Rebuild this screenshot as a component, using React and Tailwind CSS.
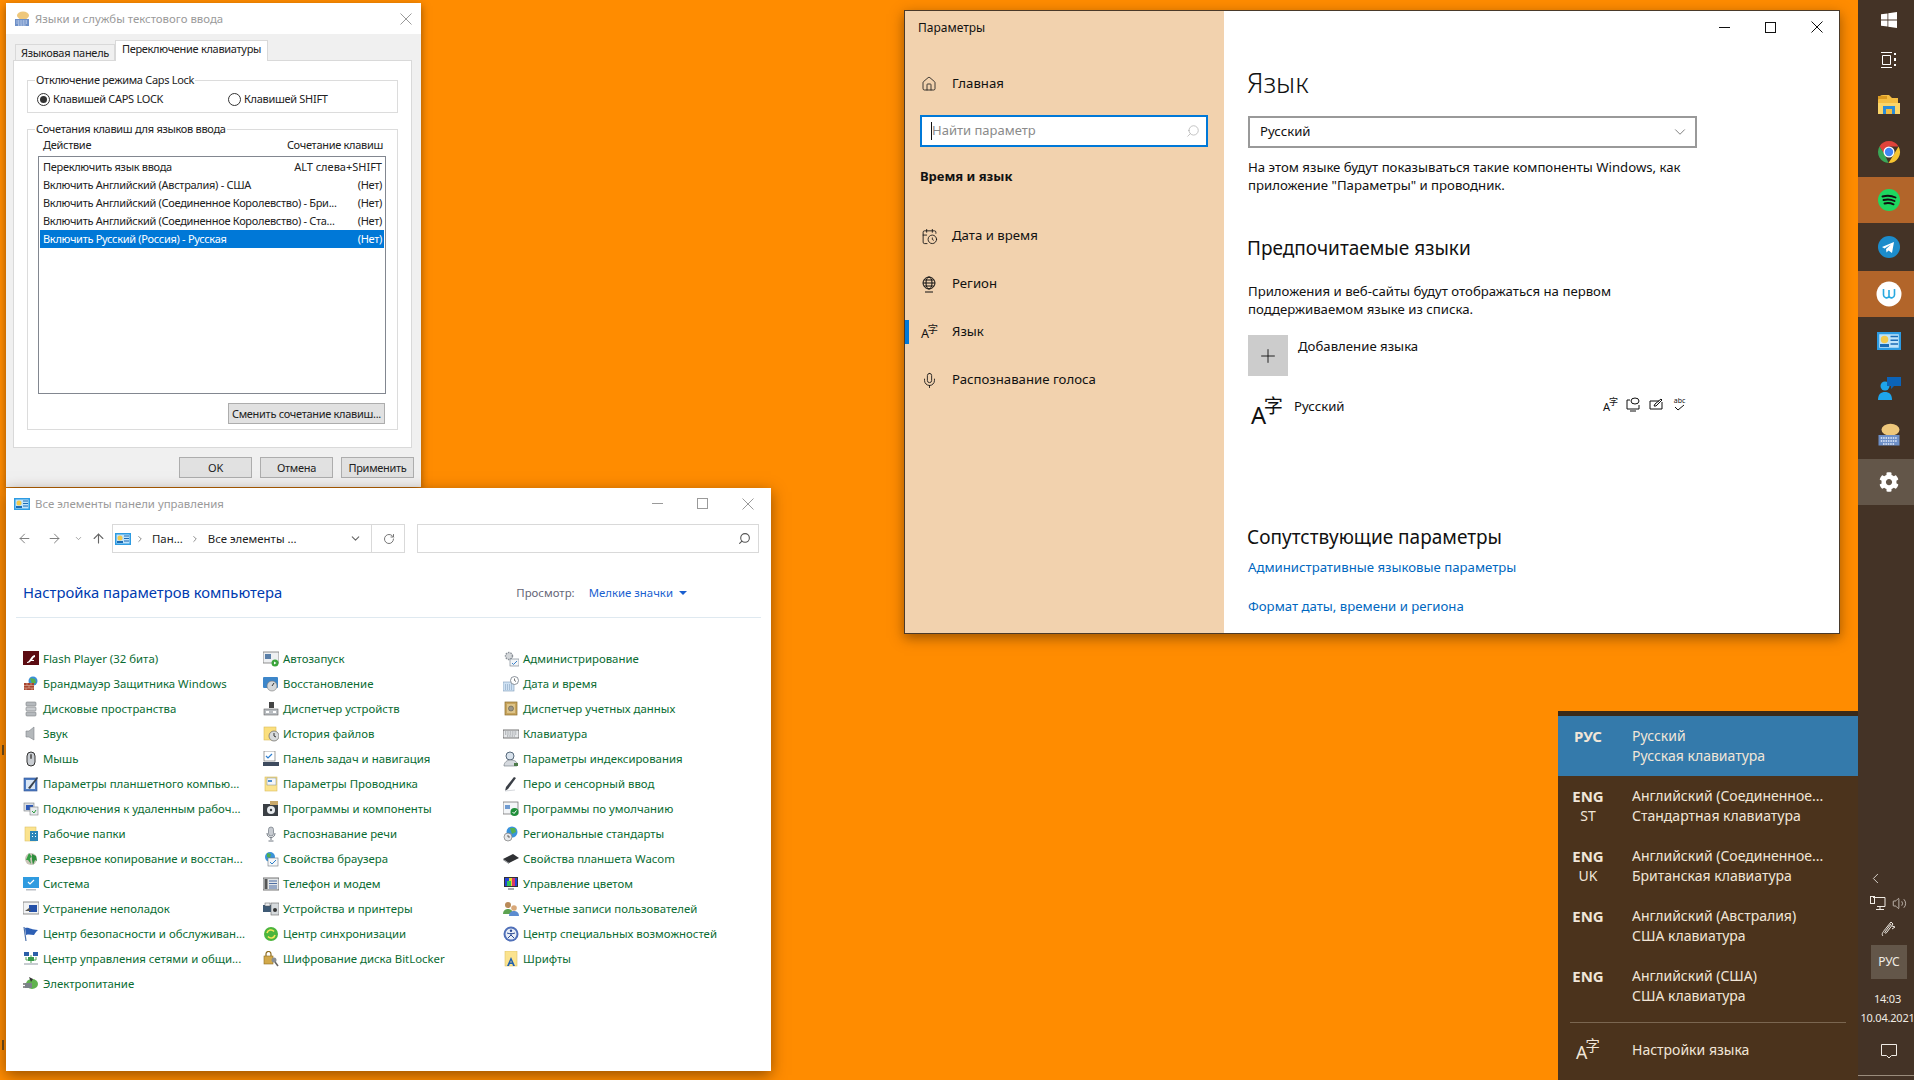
import React from 'react';
import { ArrowLeft, ArrowRight, ArrowUp, CalendarClock, ChevronDown, ChevronLeft, ChevronRight, Home, Mic, Plus, RotateCw, Search, Volume2 } from 'lucide-react';
import { FaCog } from 'react-icons/fa';

const font = "font-['Noto_Sans','Liberation_Sans',sans-serif]";

// Small control panel icons, drawn on a 16x16 grid
const cpIcons = {
  flash: <><rect x="0" y="0" width="16" height="14" fill="#5c0c12" /><path d="M4 11c3 0 3-6 8-7v2c-2 .3-2 2-3 3h2v1H8c-1 1-2 2-4 2z" fill="#fff" /></>,
  firewall: <><circle cx="10" cy="5" r="4.5" fill="#3a8fd8" /><path d="M7 2l5 1 1 4-4 1z" fill="#59b04a" /><rect x="1" y="7" width="10" height="7" fill="#a8452f" /><path d="M1 9.5h10M1 12h10M4 7v2.500M8 7v2.500M6 9.500V12M3 12v2M9 12v2" stroke="#e3b9a6" strokeWidth=".6" /></>,
  storage: <><rect x="3" y="1" width="10" height="4" rx="1" fill="#b5b9bd" stroke="#7c8084" strokeWidth=".6" /><rect x="3" y="6" width="10" height="4" rx="1" fill="#c8cbce" stroke="#7c8084" strokeWidth=".6" /><rect x="3" y="11" width="10" height="4" rx="1" fill="#b5b9bd" stroke="#7c8084" strokeWidth=".6" /></>,
  sound: <><path d="M3 5h3l5-4v13l-5-3H3z" fill="#b4b8bb" stroke="#80858a" strokeWidth=".6" /></>,
  mouse: <><rect x="4" y="1" width="8" height="14" rx="4" fill="#c9cdd2" stroke="#333" strokeWidth="1" /><rect x="7" y="3" width="2" height="5" rx="1" fill="#666" /></>,
  tablet: <><rect x="1" y="2" width="13" height="13" fill="#4d7cc3" stroke="#2c4f8f" strokeWidth=".6" /><rect x="3" y="4" width="9" height="9" fill="#d9e6f5" /><path d="M5 12L14 1l1 1-8 11z" fill="#39424e" /></>,
  rdp: <><rect x="1" y="2" width="10" height="8" fill="#d9dde2" stroke="#7c8084" strokeWidth=".6" /><rect x="3" y="4" width="7" height="5" fill="#2b58b8" /><rect x="7" y="6" width="8" height="8" fill="#e8ebee" stroke="#7c8084" strokeWidth=".6" /><path d="M9 10l2 2 2-3" stroke="#2a9a3d" fill="none" /></>,
  workfolders: <><rect x="2" y="1" width="11" height="14" fill="#fbe38e" stroke="#dcc26a" strokeWidth=".6" /><rect x="7" y="5" width="8" height="10" fill="#2c86b8" /><path d="M9 7h1v1H9zM12 7h1v1h-1zM9 10h1v1H9zM12 10h1v1h-1z" fill="#fff" /></>,
  backup: <><circle cx="8" cy="8" r="6" fill="#c9c4b8" /><path d="M3 9l3-7 3 4-2 1 1 6-3-4z" fill="#35a045" /><path d="M9 3l4 2 1 5-2-1-2 5-1-5z" fill="#2f8f3e" /></>,
  system: <><rect x="0" y="1" width="16" height="11" fill="#2f9be0" /><path d="M5 6l2 2 4-4" stroke="#fff" strokeWidth="1.200" fill="none" /><rect x="3" y="13" width="10" height="1.500" fill="#b9bec4" /></>,
  troubleshoot: <><rect x="0" y="1" width="16" height="12" fill="#f1f2f3" stroke="#777" strokeWidth=".8" /><rect x="6" y="4" width="8" height="7" fill="#2450a8" /><path d="M2 10l4-3 2 3z" fill="#555" /></>,
  flag: <><path d="M3 15L1 1" stroke="#4a6fa8" strokeWidth="1.200" /><path d="M2 2c4-1 6 2 13 2-2 2-3 3-4 5-3 0-5-1-8 0z" fill="#2d5fb4" /></>,
  network: <><path d="M8 4v9M3 6v3h10V6" stroke="#58a55b" fill="none" /><rect x="1" y="1" width="5" height="4" fill="#2c5fa8" /><rect x="10" y="1" width="5" height="4" fill="#2c5fa8" /><rect x="5" y="6" width="6" height="4" fill="#3a9a4c" /><rect x="1" y="12" width="14" height="2" fill="#c7ccd1" /></>,
  power: <><ellipse cx="9" cy="8" rx="6" ry="5" fill="#60b24f" /><rect x="2" y="7" width="7" height="5" fill="#7b8288" /><path d="M0 8h2M0 11h2" stroke="#222" /><path d="M6 1l4 2-2 3z" fill="#333" /></>,
  autorun: <><rect x="0" y="1" width="16" height="11" fill="#eef0f2" stroke="#777" strokeWidth=".8" /><rect x="2" y="3" width="6" height="5" fill="#5a7fa8" /><circle cx="12" cy="12" r="3.500" fill="#3aa53a" /><path d="M11 10.500l2.500 1.500-2.500 1.500z" fill="#fff" /></>,
  restore: <><rect x="0" y="1" width="15" height="11" rx="1" fill="#3d86c9" /><circle cx="9" cy="10" r="5" fill="#d5d8da" stroke="#777" strokeWidth=".6" /><path d="M9 10l2-3" stroke="#333" /></>,
  devmgr: <><rect x="6" y="1" width="5" height="6" fill="#444" /><rect x="1" y="8" width="14" height="6" fill="#b8bcc0" stroke="#666" strokeWidth=".6" /><rect x="3" y="10" width="3" height="2" fill="#fff" /><rect x="10" y="10" width="3" height="2" fill="#fff" /></>,
  history: <><rect x="1" y="1" width="12" height="13" fill="#fbdf7d" stroke="#d9bd5b" strokeWidth=".6" /><circle cx="11" cy="10" r="5" fill="#d8dbdd" stroke="#666" strokeWidth=".7" /><path d="M11 7v3l2 1" stroke="#333" fill="none" /></>,
  taskbar: <><rect x="1" y="0" width="11" height="10" fill="#fff" stroke="#777" strokeWidth=".7" /><path d="M3 5l2 2 4-4" stroke="#2f7fd0" strokeWidth="1.200" fill="none" /><rect x="0" y="11" width="16" height="4" fill="#3e4b5e" /></>,
  explorer: <><rect x="2" y="1" width="12" height="14" fill="#fbe38e" stroke="#d9bd5b" strokeWidth=".6" /><rect x="4" y="2" width="9" height="7" fill="#f5f6f7" stroke="#7a8a99" strokeWidth=".5" /><rect x="5" y="4" width="4" height="2" fill="#4f8fd0" /></>,
  programs: <><rect x="0" y="3" width="15" height="12" fill="#3a3f44" /><rect x="7" y="0" width="8" height="4" fill="#c9a86a" /><circle cx="8" cy="9" r="4" fill="#e8ebee" /><circle cx="8" cy="9" r="1.200" fill="#3a3f44" /></>,
  speech: <><rect x="5.500" y="1" width="5" height="9" rx="2.500" fill="#c7cbd1" stroke="#6f7780" strokeWidth=".7" /><path d="M4 7c0 6 8 6 8 0M8 12v2M5.500 15h5" stroke="#6f7780" fill="none" /></>,
  inet: <><circle cx="7" cy="6" r="5" fill="#3b93d9" /><path d="M4 2l4 1-1 4-3-1z" fill="#4fae52" /><rect x="5" y="7" width="10" height="8" fill="#f4f6f8" stroke="#6d7883" strokeWidth=".6" /><path d="M7 11l2 2 4-4" stroke="#2d7fc8" fill="none" /></>,
  phone: <><rect x="0" y="2" width="16" height="12" fill="#e3e6e8" stroke="#555" strokeWidth=".8" /><rect x="1.500" y="3" width="3" height="10" fill="#555" /><path d="M6 5h8M6 7.500h8M6 10h8M6 12h8" stroke="#4d6da3" /></>,
  devices: <><rect x="0" y="4" width="9" height="7" fill="#3e5a75" /><rect x="2" y="2" width="5" height="3" fill="#eef0f2" stroke="#555" strokeWidth=".5" /><rect x="8" y="2" width="8" height="12" fill="#d6dadd" stroke="#666" strokeWidth=".6" /><circle cx="12" cy="9" r="2" fill="#333" /></>,
  sync: <><circle cx="8" cy="8" r="7" fill="#4cb53d" /><path d="M4 7a4 4 0 0 1 7-1.500M12 9a4 4 0 0 1-7 1.500" stroke="#f6e65a" strokeWidth="1.600" fill="none" /></>,
  bitlocker: <><rect x="1" y="5" width="9" height="8" fill="#d2a94a" stroke="#8c6b1f" strokeWidth=".6" /><path d="M3 5V3a2.500 2.500 0 0 1 5 0v2" stroke="#8c6b1f" fill="none" strokeWidth="1.200" /><circle cx="11" cy="9" r="2.500" fill="#8a8f94" /><path d="M12 11l3 4" stroke="#666" strokeWidth="1.500" /></>,
  admin: <><circle cx="6" cy="5" r="3.500" fill="#d4d7da" stroke="#8a9097" strokeWidth="1.400" strokeDasharray="1.500 1" /><rect x="7" y="8" width="9" height="7" fill="#f3f5f7" stroke="#6b7784" strokeWidth=".6" /><path d="M9 12l1.500 1.500L14 10" stroke="#3a7fc8" fill="none" /></>,
  datetime: <><rect x="0" y="6" width="11" height="9" fill="#cfe1f3" stroke="#7d9ab8" strokeWidth=".6" /><path d="M2 9h7M2 11h7M2 13h7" stroke="#7d9ab8" strokeDasharray="1 1" /><circle cx="11.500" cy="4.500" r="4" fill="#fff" stroke="#6f7780" strokeWidth=".8" /><path d="M11.500 2.500v2l1.500 1" stroke="#333" fill="none" strokeWidth=".7" /></>,
  cred: <><rect x="2" y="1" width="12" height="13" fill="#c7a45c" stroke="#8c6d2c" strokeWidth=".7" /><rect x="4" y="3" width="8" height="9" fill="#ddc48a" /><circle cx="8" cy="7.500" r="2.500" fill="#9a9588" stroke="#5f5a4a" strokeWidth=".6" /></>,
  keyboard: <><rect x="0" y="4" width="16" height="8" fill="#e6e8ea" stroke="#555" strokeWidth=".8" /><path d="M2 6h12M2 8h12M4 10h8" stroke="#8a8f94" strokeDasharray="1 .7" /></>,
  index: <><circle cx="7" cy="5" r="4" fill="#d8e2ec" stroke="#56687a" strokeWidth="1" /><path d="M1 14c1-4 4-5 7-5s5 1 6 3v3H1z" fill="#d5d9de" stroke="#6d757d" strokeWidth=".6" /><rect x="11" y="12" width="4" height="3" fill="#4d7a4a" /></>,
  pen: <><path d="M2 15l1-4L11 1l2 1-8 11z" fill="#3a3f46" /><path d="M2 15l10-1" stroke="#d5d8dc" /></>,
  defaults: <><rect x="0" y="1" width="15" height="12" fill="#f3f5f7" stroke="#666" strokeWidth=".7" /><rect x="2" y="4" width="5" height="4" fill="#6f9bd1" /><circle cx="11.500" cy="11" r="4" fill="#1f8f3a" /><path d="M9.500 11l1.500 1.500 2.500-3" stroke="#fff" fill="none" /></>,
  regional: <><circle cx="9" cy="6" r="5.500" fill="#3993dc" /><path d="M7 2l5 0 1 4-4 2z" fill="#55b24e" /><circle cx="5" cy="11" r="4" fill="#e6e8ea" stroke="#777" strokeWidth=".7" /><path d="M5 9v2h2" stroke="#333" fill="none" strokeWidth=".7" /></>,
  wacom: <><path d="M0 8l10-5 6 4-10 5z" fill="#2f3134" /><path d="M0 8l6 4v1L0 9z" fill="#7f8387" /></>,
  color: <><rect x="1" y="1" width="14" height="10" fill="#333" /><rect x="2" y="2" width="12" height="8" fill="#2544d8" /><rect x="6" y="2" width="4" height="8" fill="#e7d832" /><rect x="9" y="2" width="3" height="8" fill="#d83a6a" /><rect x="4" y="5" width="4" height="5" fill="#32c05a" /><rect x="5" y="12" width="6" height="2" fill="#a9adb2" /></>,
  users: <><circle cx="5" cy="4" r="3" fill="#b98a58" /><path d="M0 13c0-4 3-5 5-5s5 1 5 5z" fill="#5da351" /><circle cx="11" cy="7" r="2.800" fill="#d8a878" /><path d="M6 15c0-4 3-5 5-5s5 1 5 5z" fill="#5c8cd0" /></>,
  access: <><circle cx="8" cy="8" r="7.500" fill="#4f6fb8" /><circle cx="8" cy="8" r="5.500" fill="#e8eef7" /><circle cx="8" cy="4.800" r="1.200" fill="#2c4a94" /><path d="M4 7c3 1 5 1 8 0M8 7v2l-3 3M8 9l3 3" stroke="#2c4a94" fill="none" /></>,
  fonts: <><rect x="2" y="0" width="12" height="15" fill="#fbe38e" stroke="#dcc26a" strokeWidth=".6" /><path d="M4 15l4-9 4 9h-2l-.7-2H6.700L6 15zm3.200-3.500h1.600L8 9.400z" fill="#1f5fb0" /></>,
};

const CpIcon = ({ name }) => (
  <svg width="16" height="16" viewBox="0 0 16 16" className="shrink-0">{cpIcons[name]}</svg>
);

const cpItems = [
  ['flash', 'Flash Player (32 бита)'], ['autorun', 'Автозапуск'], ['admin', 'Администрирование'],
  ['firewall', 'Брандмауэр Защитника Windows'], ['restore', 'Восстановление'], ['datetime', 'Дата и время'],
  ['storage', 'Дисковые пространства'], ['devmgr', 'Диспетчер устройств'], ['cred', 'Диспетчер учетных данных'],
  ['sound', 'Звук'], ['history', 'История файлов'], ['keyboard', 'Клавиатура'],
  ['mouse', 'Мышь'], ['taskbar', 'Панель задач и навигация'], ['index', 'Параметры индексирования'],
  ['tablet', 'Параметры планшетного компью...'], ['explorer', 'Параметры Проводника'], ['pen', 'Перо и сенсорный ввод'],
  ['rdp', 'Подключения к удаленным рабоч...'], ['programs', 'Программы и компоненты'], ['defaults', 'Программы по умолчанию'],
  ['workfolders', 'Рабочие папки'], ['speech', 'Распознавание речи'], ['regional', 'Региональные стандарты'],
  ['backup', 'Резервное копирование и восстан...'], ['inet', 'Свойства браузера'], ['wacom', 'Свойства планшета Wacom'],
  ['system', 'Система'], ['phone', 'Телефон и модем'], ['color', 'Управление цветом'],
  ['troubleshoot', 'Устранение неполадок'], ['devices', 'Устройства и принтеры'], ['users', 'Учетные записи пользователей'],
  ['flag', 'Центр безопасности и обслуживан...'], ['sync', 'Центр синхронизации'], ['access', 'Центр специальных возможностей'],
  ['network', 'Центр управления сетями и общи...'], ['bitlocker', 'Шифрование диска BitLocker'], ['fonts', 'Шрифты'],
  ['power', 'Электропитание'],
];

const shortcuts = [
  ['Переключить язык ввода', 'ALT слева+SHIFT'],
  ['Включить Английский (Австралия) - США', '(Нет)'],
  ['Включить Английский (Соединенное Королевство) - Бри...', '(Нет)'],
  ['Включить Английский (Соединенное Королевство) - Ста...', '(Нет)'],
  ['Включить Русский (Россия) - Русская', '(Нет)'],
];

const langs = [
  ['РУС', '', 'Русский', 'Русская клавиатура'],
  ['ENG', 'ST', 'Английский (Соединенное...', 'Стандартная клавиатура'],
  ['ENG', 'UK', 'Английский (Соединенное...', 'Британская клавиатура'],
  ['ENG', '', 'Английский (Австралия)', 'США клавиатура'],
  ['ENG', '', 'Английский (США)', 'США клавиатура'],
];

const CloseGlyph = ({ color = '#111', size = 12 }) => (
  <svg width={size} height={size} viewBox="0 0 12 12" stroke={color} fill="none"><path d="M.5.5l11 11M11.500.5l-11 11" /></svg>
);

// "A" with the ideograph over its shoulder, scaled from the icon size
const LangGlyph = ({ size = 32, color = '#111' }) => (
  <span className="relative block shrink-0" style={{ width: size, height: size, color }}>
    <span className="absolute left-0 bottom-0 leading-none font-['Noto_Sans',sans-serif]" style={{ fontSize: size * 0.74 }}>A</span>
    <span className="absolute right-0 top-0 leading-none font-['Noto_Sans_CJK_SC',sans-serif]" style={{ fontSize: size * 0.6 }}>字</span>
  </span>
);

const KeyboardLogo = ({ size = 16 }) => (
  <svg width={size} height={size} viewBox="0 0 16 16">
    <ellipse cx="9" cy="4.500" rx="6" ry="4" fill="#eec77b" />
    <path d="M8 8l1 2 1-2z" fill="#eec77b" />
    <rect x="1" y="8" width="14" height="7" fill="#6d8fc7" />
    <path d="M2.500 10h11M2.500 12h11M4 14h8" stroke="#e6eefa" strokeDasharray="1 .6" />
  </svg>
);

const CpLogo = ({ size = 16 }) => (
  <svg width={size} height={size} viewBox="0 0 16 16">
    <rect x="0" y="2" width="16" height="12" fill="#2d9be2" />
    <rect x="1.500" y="3.500" width="13" height="9" fill="#bfe3fa" />
    <circle cx="5" cy="7" r="2.500" fill="#f2c94c" />
    <path d="M2 12h6V10H2z" fill="#1a6bb5" />
    <path d="M9 5h5M9 7.500h5M9 10h5" stroke="#1a6bb5" />
  </svg>
);

const TabDialog = () => (
  <div className={`absolute left-[6px] top-[3px] w-[415px] h-[484px] flex flex-col bg-[#f0f0f0] text-[11px] tracking-[-0.3px] leading-4 text-[#222] shadow-[0_3px_8px_rgba(60,30,0,0.55)] ${font}`}>
    <div className="h-[31px] shrink-0 bg-white flex items-center pl-[8px] pr-[9px]">
      <KeyboardLogo />
      <span className="ml-[5px] text-[11.4px] tracking-normal text-[#9a9a9a]">Языки и службы текстового ввода</span>
      <span className="ml-auto"><CloseGlyph color="#9a9a9a" /></span>
    </div>
    <div className="h-[26px] shrink-0 flex items-end pl-[9px] whitespace-nowrap">
      <div className="h-[16px] w-[100px] flex items-center justify-center bg-[#f0f0f0] border border-b-0 border-[#d9d9d9]">Языковая панель</div>
      <div className="relative z-10 h-[21px] w-[153px] -mb-px pb-1 flex items-center justify-center bg-white border border-b-0 border-[#d9d9d9]">Переключение клавиатуры</div>
    </div>
    <div className="ml-[7px] w-[399px] h-[388px] shrink-0 bg-white border border-[#d9d9d9] px-[13px] pt-[11px]">
      <fieldset className="h-[41px] border border-[#dcdcdc] px-[8px]">
        <legend className="ml-[-1px] px-[1px]">Отключение режима Caps Lock</legend>
        <div className="flex items-center mt-[3px] ml-px h-4">
          <span className="w-[13px] h-[13px] rounded-full border border-[#333] flex items-center justify-center"><span className="w-[7px] h-[7px] rounded-full bg-[#333]" /></span>
          <span className="ml-[3px] w-[175px]">Клавишей CAPS LOCK</span>
          <span className="w-[13px] h-[13px] rounded-full border border-[#333]" />
          <span className="ml-[3px]">Клавишей SHIFT</span>
        </div>
      </fieldset>
      <fieldset className="mt-[8px] h-[309px] border border-[#dcdcdc] px-[10px] flex flex-col">
        <legend className="ml-[-3px] px-[1px]">Сочетания клавиш для языков ввода</legend>
        <div className="h-4 flex justify-between pl-[5px] pr-[3px] w-[348px]">
          <span>Действие</span>
          <span>Сочетание клавиш</span>
        </div>
        <div className="mt-[3px] w-[348px] h-[238px] border border-[#828790] p-px">
          {shortcuts.map(([action, keys], i) => (
            <div key={action} className={`h-[18px] flex items-center justify-between pl-[3px] pr-[2px] whitespace-nowrap ${i === 4 ? 'bg-[#0078d7] text-white' : ''}`}>
              <span>{action}</span>
              <span className={i === 0 ? 'tracking-normal' : ''}>{keys}</span>
            </div>
          ))}
        </div>
        <button className="mt-[9px] ml-[190px] w-[157px] h-[21px] bg-[#e1e1e1] border border-[#adadad] whitespace-nowrap">Сменить сочетание клавиш...</button>
      </fieldset>
    </div>
    <div className="flex justify-end gap-[8px] pr-[7px] mt-[9px]">
      <button className="w-[73px] h-[21px] bg-[#e1e1e1] border border-[#adadad]">OK</button>
      <button className="w-[73px] h-[21px] bg-[#e1e1e1] border border-[#adadad]">Отмена</button>
      <button className="w-[73px] h-[21px] bg-[#e1e1e1] border border-[#adadad]">Применить</button>
    </div>
  </div>
);

const ControlPanel = () => (
  <div className={`absolute left-[6px] top-[488px] w-[765px] h-[583px] bg-white text-[11.4px] leading-4 shadow-[0_4px_14px_rgba(60,30,0,0.55)] ${font}`}>
    <div className="h-[31px] flex items-center pl-[8px] pr-[17px] text-[#9a9a9a]">
      <CpLogo />
      <span className="ml-[5px]">Все элементы панели управления</span>
      <span className="ml-auto flex items-center gap-[34px]">
        <span className="w-[11px] h-px bg-[#9a9a9a]" />
        <span className="w-[11px] h-[11px] border border-[#9a9a9a]" />
        <CloseGlyph color="#9a9a9a" />
      </span>
    </div>
    <div className="mt-[5px] h-[29px] flex items-center text-[#222] whitespace-nowrap">
      <ArrowLeft size={15} strokeWidth={1.500} className="ml-[11px] text-[#777]" />
      <ArrowRight size={15} strokeWidth={1.500} className="ml-[15px] text-[#777]" />
      <ChevronDown size={9} className="ml-[12px] text-[#888]" />
      <ArrowUp size={15} strokeWidth={1.800} className="ml-[8px] text-[#666]" />
      <div className="ml-[6px] w-[293px] h-full flex items-center border border-[#d9d9d9] pl-[2px] pr-[9px]">
        <CpLogo />
        <ChevronRight size={10} className="ml-[4px] text-[#777]" />
        <span className="ml-[7px]">Пан...</span>
        <ChevronRight size={10} className="ml-[7px] text-[#777]" />
        <span className="ml-[8px]">Все элементы ...</span>
        <ChevronDown size={13} className="ml-auto text-[#666]" />
        <span className="ml-[9px] w-px h-full bg-[#d9d9d9]" />
        <RotateCw size={12} className="ml-[11px] text-[#777]" />
      </div>
      <div className="ml-[12px] w-[342px] h-full flex items-center justify-end border border-[#d9d9d9] pr-[7px]">
        <Search size={13} strokeWidth={2} className="-scale-x-100 text-[#555]" />
      </div>
    </div>
    <div className="flex items-center h-[38px] mt-[21px] pl-[17px] pr-[84px]">
      <span className="mb-[2px] text-[14.8px] text-[#003bb0]">Настройка параметров компьютера</span>
      <span className="ml-auto text-[#667]">Просмотр:</span>
      <span className="ml-[14px] text-[#1a5fd0]">Мелкие значки</span>
      <span className="ml-[6px] w-0 h-0 border-x-[4px] border-x-transparent border-t-[4px] border-t-[#1a5fd0]" />
    </div>
    <div className="mx-[10px] mt-[5px] h-px bg-[#dfe9f0]" />
    <div className="mt-[28px] pl-[17px] grid grid-cols-[240px_240px_240px] auto-rows-[25px]">
      {cpItems.map(([icon, label]) => (
        <div key={label} className="flex items-center gap-[4px] whitespace-nowrap text-[#0a6b32]">
          <CpIcon name={icon} />
          <span>{label}</span>
        </div>
      ))}
    </div>
  </div>
);

const navRows = [
  { label: 'Дата и время', icon: <CalendarClock size={17} strokeWidth={1.200} /> },
  { label: 'Регион', icon: (
    <svg width="17" height="17" viewBox="0 0 17 17" fill="none" stroke="#111"><circle cx="8" cy="7" r="6" /><ellipse cx="8" cy="7" rx="3" ry="6" /><path d="M2 7h12M3 4h10M3 10h10M4 16h8" /></svg>
  ) },
  { label: 'Язык', icon: <LangGlyph size={17} /> },
  { label: 'Распознавание голоса', icon: <Mic size={17} strokeWidth={1.200} /> },
];

const SettingsWindow = () => (
  <div className={`absolute left-[904px] top-[10px] w-[936px] h-[624px] flex bg-white border border-[#4a3a2a] text-[#111] shadow-[0_4px_12px_rgba(60,30,0,0.5)] ${font}`}>
    <aside className="w-[319px] shrink-0 bg-[#f2d2ae] flex flex-col">
      <div className="h-[34px] flex items-center pl-[13px] text-[12px]">Параметры</div>
      <div className="mt-[19px] h-[40px] flex items-center pl-[16px] text-[13.2px]">
        <Home size={16} strokeWidth={1.200} />
        <span className="ml-[15px]">Главная</span>
      </div>
      <div className="mt-[11px] ml-[15px] mr-[16px] h-[32px] bg-white border-2 border-[#0078d7] flex items-center pl-[9px] pr-[6px] text-[13px] text-[#8a8a8a]">
        <span className="w-px h-[18px] bg-[#111]" />
        <span>Найти параметр</span>
        <Search size={14} strokeWidth={1.200} className="ml-auto -scale-x-100 text-[#aaa]" />
      </div>
      <div className="mt-[20px] h-[20px] pl-[15px] flex items-center text-[13px] font-bold">Время и язык</div>
      <div className="mt-[25px]">
        {navRows.map((row, i) => (
          <div key={row.label} className="relative h-[48px] flex items-center pl-[16px] text-[13.2px]">
            {i === 2 && <span className="absolute left-0 top-[12px] w-[4px] h-[24px] bg-[#0078d7]" />}
            <span className="w-[20px] flex justify-start">{row.icon}</span>
            <span className="ml-[11px]">{row.label}</span>
          </div>
        ))}
      </div>
    </aside>
    <main className="relative flex-1 pl-[23px] pt-[52px]">
      <div className="absolute right-[16px] top-[10px] flex items-center gap-[35px]">
        <span className="w-[11px] h-px bg-[#111]" />
        <span className="w-[11px] h-[11px] border border-[#111]" />
        <CloseGlyph />
      </div>
      <h1 className="h-[40px] flex items-center text-[27px] font-light">Язык</h1>
      <div className="mt-[13px] ml-px w-[449px] h-[32px] border-2 border-[#999] flex items-center pl-[10px] pr-[6px] text-[13.2px]">
        <span>Русский</span>
        <ChevronDown size={18} strokeWidth={1} className="ml-auto text-[#555]" />
      </div>
      <p className="mt-[10px] ml-px text-[13.2px] leading-[18px]">На этом языке будут показываться такие компоненты Windows, как<br />приложение "Параметры" и проводник.</p>
      <h2 className="mt-[40px] h-[28px] flex items-center text-[19px]">Предпочитаемые языки</h2>
      <p className="mt-[20px] ml-px text-[13.2px] leading-[18px]">Приложения и веб-сайты будут отображаться на первом<br />поддерживаемом языке из списка.</p>
      <div className="mt-[17px] ml-px flex">
        <div className="w-[40px] h-[41px] bg-[#cccccc] flex items-center justify-center"><Plus size={22} strokeWidth={1} /></div>
        <span className="ml-[10px] mt-[1px] text-[13.2px] leading-5">Добавление языка</span>
      </div>
      <div className="mt-[20px] flex w-[449px] h-[40px]">
        <span className="ml-[4px]"><LangGlyph size={32} /></span>
        <span className="ml-[11px] text-[13.2px] leading-5">Русский</span>
        <div className="ml-auto mr-[9px] flex items-start gap-[8px] pt-[1px]">
          <LangGlyph size={15} />
          <svg width="15" height="15" viewBox="0 0 15 15" fill="none" stroke="#111"><path d="M4 3H1v9h12V8M4 14h6" /><ellipse cx="9" cy="4" rx="4" ry="3" /></svg>
          <svg width="15" height="15" viewBox="0 0 15 15" fill="none" stroke="#111"><path d="M1 4h9M1 4v8h12V5" /><path d="M5 9l1-2 6-5 1 1-6 6z" /></svg>
          <span className="w-[15px] flex flex-col items-center">
            <span className="text-[7px] leading-[7px]">abc</span>
            <svg width="11" height="8" viewBox="0 0 11 8" fill="none" stroke="#111"><path d="M1 3l3 3 6-5" /></svg>
          </span>
        </div>
      </div>
      <h2 className="mt-[87px] h-[28px] flex items-center text-[19px]">Сопутствующие параметры</h2>
      <div className="mt-[7px] ml-px h-[20px] flex items-center text-[13.2px] text-[#0067c0]">Административные языковые параметры</div>
      <div className="mt-[19px] ml-px h-[20px] flex items-center text-[13.2px] text-[#0067c0]">Формат даты, времени и региона</div>
    </main>
  </div>
);

const LangFlyout = () => (
  <div className={`absolute left-[1558px] top-[711px] bottom-0 w-[300px] bg-[#4b331c] border-t-[5px] border-[#3a2a18] text-[14px] leading-5 text-[#f1e6d8] ${font}`}>
    {langs.map(([code, sub, name, layout], i) => (
      <div key={layout + i} className={`h-[60px] flex items-center ${i === 0 ? 'bg-[#347aab]' : ''}`}>
        <div className="w-[60px] self-start pt-[10px] text-center">
          <div className="font-bold text-[15px]">{code}</div>
          <div>{sub}</div>
        </div>
        <div className="ml-[14px] whitespace-nowrap">
          <div>{name}</div>
          <div>{layout}</div>
        </div>
      </div>
    ))}
    <div className="mx-[12px] mt-[6px] h-px bg-[#7a6650]" />
    <div className="h-[54px] flex items-center">
      <div className="w-[60px] flex justify-center"><LangGlyph size={24} color="#f1e6d8" /></div>
      <span className="ml-[14px]">Настройки языка</span>
    </div>
  </div>
);

const taskApps = [
  { icon: (
    <svg width="24" height="24" viewBox="0 0 24 24"><path d="M1 6a5 5 0 0 1 5-5h6a5 5 0 0 1 0 0l3 3h6v16H3a2 2 0 0 1-2-2z" fill="#f4bd42" /><rect x="1" y="2" width="9" height="3" fill="#d99a22" /><rect x="1" y="9" width="22" height="11" fill="#fbd568" /><rect x="6" y="12" width="12" height="8" fill="#2b8cd8" /><rect x="9" y="15" width="6" height="5" fill="#f4bd42" /></svg>
  ) },
  { lift: true, icon: (
    <svg width="24" height="24" viewBox="0 0 24 24">
      <path d="M12 1a11 11 0 0 1 9.500 5.500H12z" fill="#e0433a" /><path d="M2.500 6.500A11 11 0 0 1 12 1v5.500L7 14z" fill="#e0433a" />
      <path d="M2.500 6.500L8 15l3.500 8A11 11 0 0 1 2.500 6.500z" fill="#3aa757" /><path d="M21.500 6.500A11 11 0 0 1 11.500 23l5-8z" fill="#f7c531" />
      <circle cx="12" cy="12" r="5.500" fill="#fff" /><circle cx="12" cy="12" r="4.200" fill="#4286f5" />
    </svg>
  ) },
  { active: true, icon: (
    <svg width="24" height="24" viewBox="0 0 24 24"><circle cx="12" cy="12" r="11" fill="#1ed760" /><path d="M5.500 8.500c4.500-1.200 9-1 13 1M6.500 12c4-1 7.500-.8 11 1M7.500 15.500c3-.8 6-.6 9 .8" stroke="#111" strokeWidth="1.900" fill="none" strokeLinecap="round" /></svg>
  ) },
  { icon: (
    <svg width="24" height="24" viewBox="0 0 24 24"><circle cx="12" cy="12" r="11" fill="#1c8ccb" /><path d="M5 12l12-5-2 11-3.500-2.500-2 2-.5-3.500 5-4.500-6.500 4z" fill="#fff" /></svg>
  ) },
  { active: true, icon: (
    <svg width="26" height="26" viewBox="0 0 26 26"><circle cx="13" cy="13" r="12.500" fill="#fff" /><path d="M7.500 8v6a3 3 0 0 0 5.500 1.500A3 3 0 0 0 18.500 14V8M13 9v6" stroke="#29a9e0" strokeWidth="1.600" fill="none" /></svg>
  ) },
  { icon: <CpLogo size={24} /> },
  { icon: (
    <svg width="24" height="26" viewBox="0 0 24 26"><circle cx="8" cy="11" r="4.500" fill="#1ea5ec" /><path d="M1 25c0-6 3-8 7-8s7 2 7 8z" fill="#1ea5ec" /><path d="M10 2h14v9h-7l-3 3V11h-4z" fill="#0b63b8" /></svg>
  ) },
  { icon: <KeyboardLogo size={24} /> },
  { highlight: true, icon: <FaCog size={20} color="#fff" /> },
];

const Taskbar = () => (
  <div className={`absolute right-0 top-0 bottom-0 w-[56px] bg-[#443326] flex flex-col items-stretch text-[#f0ebe4] text-[12px] ${font}`}>
    <div className="h-[40px] pl-[6px] flex items-center justify-center">
      <svg width="16" height="16" viewBox="0 0 16 16" fill="#fff"><path d="M0 2.300l6.500-.9V7.600H0zM7.300 1.300L16 0v7.600H7.300zM0 8.400h6.500v6.200L0 13.700zM7.300 8.400H16V16l-8.700-1.200z" /></svg>
    </div>
    <div className="h-[43px] pl-[6px] pb-[3px] flex items-center justify-center">
      <svg width="16" height="16" viewBox="0 0 16 16" fill="none" stroke="#fff"><path d="M0 .500h11M0 15.500h11M1.500 3.500h8v9h-8z" /><path d="M14 1v2M14 6v3M14 12v2" strokeWidth="2" /></svg>
    </div>
    {taskApps.map((app, i) => (
      <div key={i} className={`h-[47px] pl-[6px] shrink-0 border-b border-[#443326] flex items-center justify-center ${app.lift ? 'pb-[3px]' : ''} ${app.active ? 'bg-[#b2652a]' : ''} ${app.highlight ? 'bg-[#635649]' : ''}`}>{app.icon}</div>
    ))}
    <div className="mt-auto pl-[6px] flex flex-col items-center">
      <ChevronLeft size={17} strokeWidth={1.200} className="self-start ml-[3px]" />
      <div className="mt-[4px] h-[24px] flex items-center gap-[6px] -ml-[1px]">
        <svg width="16" height="15" viewBox="0 0 16 15" fill="none" stroke="#f0ebe4"><path d="M3 1.500h12v9H7M10 11v2.500M6 13.500h8" /><rect x=".5" y=".5" width="4" height="7" /></svg>
        <Volume2 size={15} strokeWidth={1.100} />
      </div>
      <div className="h-[28px] flex items-center">
        <svg width="16" height="18" viewBox="0 0 16 18" fill="none" stroke="#f0ebe4"><path d="M2 16c-2-2 0-4 4-9l4-5 2 2-6 8c-1 2-3 1-2 0l6-8M11 6l3 1-3 2" /></svg>
      </div>
      <div className="mt-[2px] w-[36px] h-[34px] bg-[#635649] flex items-center justify-center">РУС</div>
      <div className="mt-[10px] -ml-[3px] leading-[19px] tracking-[-0.2px] text-center whitespace-nowrap text-[11px]">
        <div>14:03</div>
        <div>10.04.2021</div>
      </div>
      <div className="mt-[12px] h-[24px] flex items-center">
        <svg width="16" height="16" viewBox="0 0 16 16" fill="none" stroke="#f0ebe4"><path d="M.5 1.500h15v11h-5l-2.500 2.500L5.500 12.500h-5z" /></svg>
      </div>
      <div className="mt-[12px] mb-[4px] self-stretch -ml-[6px] h-px bg-[#9a8c7c]" />
    </div>
  </div>
);

export default function App() {
  return (
    <div className="relative w-[1914px] h-[1080px] overflow-hidden bg-[#ff8c00]">
      {/* desktop icon labels peeking out beside the windows */}
      <span className="absolute left-[2px] top-[745px] w-[2px] h-[10px] bg-[#6b4a1a]" />
      <span className="absolute left-[2px] top-[1040px] w-[2px] h-[10px] bg-[#6b4a1a]" />
      <TabDialog />
      <ControlPanel />
      <SettingsWindow />
      <LangFlyout />
      <Taskbar />
    </div>
  );
}
